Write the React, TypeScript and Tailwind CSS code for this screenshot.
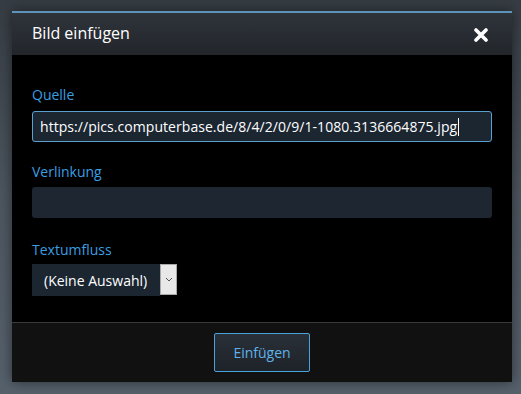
import React from "react";

export default function App() {
  return (
    <div
      className="w-[521px] h-[394px] overflow-hidden bg-gradient-to-b from-[#363c43] via-[#4d5660] to-[#56616c] pt-[11px] pl-[12px]"
      style={{ fontFamily: '"Open Sans", "Noto Sans", sans-serif' }}
    >
      <div className="w-[500px] flex flex-col shadow-[0_0_12px_rgba(0,0,0,0.5)]">
        <div className="h-[44px] border-t-2 border-[#5d93bb] bg-gradient-to-b from-[#2f343b] to-[#22262b] flex items-center justify-between pl-[20px] pr-[24px]">
          <span className="text-[16px] text-white leading-none -mt-[3px]">Bild einfügen</span>
          <svg width="14" height="14" viewBox="0 0 14 14" className="mt-[2px]">
            <path d="M2 2 L12 12 M12 2 L2 12" stroke="#ffffff" strokeWidth="3.6" strokeLinecap="round" />
          </svg>
        </div>
        <div className="bg-black px-[20px] pt-[31px] pb-[26px] flex flex-col">
          <label className="text-[14px] leading-[18px] text-[#3b9ee0]">Quelle</label>
          <div className="mt-[7px] h-[31px] rounded-[3px] border border-[#5aa0d0] bg-[#1b2631] flex items-center pl-[7px]">
            <span className="text-[14px] tracking-[0.05px] text-white whitespace-nowrap">
              https://pics.computerbase.de/8/4/2/0/9/1-1080.3136664875.jpg
            </span>
            <span className="w-px h-[18px] bg-white ml-[1px]" />
          </div>
          <label className="mt-[21px] text-[14px] leading-[18px] text-[#3b9ee0]">Verlinkung</label>
          <div className="mt-[6px] h-[31px] rounded-[3px] bg-[#1d2631]" />
          <label className="mt-[23px] text-[14px] leading-[18px] text-[#3b9ee0]">Textumfluss</label>
          <div className="mt-[5px] flex h-[32px] w-[145px]">
            <div className="flex-1 bg-[#1b2631] flex items-center pl-[12px]">
              <span className="text-[14px] text-white whitespace-nowrap">(Keine Auswahl)</span>
            </div>
            <div className="w-[17px] h-[31px] bg-[#e8e8e8] border border-[#a9a9a9] flex items-center justify-center">
              <svg width="8" height="5" viewBox="0 0 8 5">
                <path d="M1 1 L4 4 L7 1" stroke="#555" strokeWidth="1" fill="none" />
              </svg>
            </div>
          </div>
        </div>
        <div className="h-[60px] bg-[#111111] border-t border-[#3a3a3a] flex items-center justify-center">
          <button className="w-[96px] h-[39px] rounded-[2px] border border-[#4aa3dd] bg-gradient-to-b from-[#2a3038] to-[#1e2329] text-[14px] text-[#5fb2ea]">
            Einfügen
          </button>
        </div>
      </div>
    </div>
  );
}
